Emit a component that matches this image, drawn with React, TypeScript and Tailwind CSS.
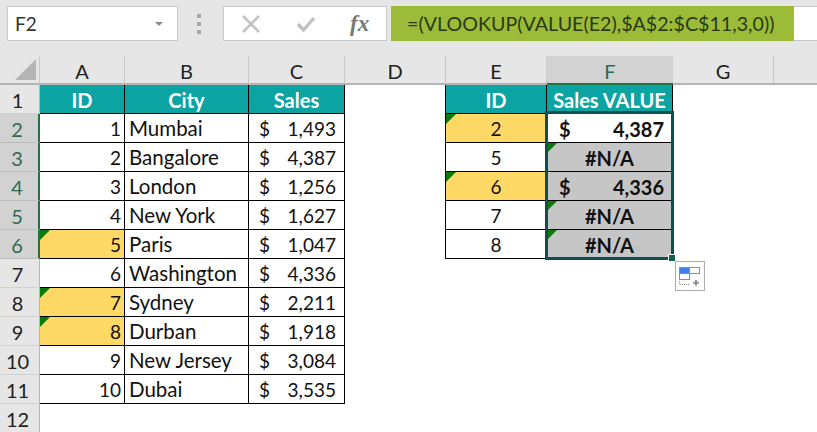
const columns = [
  { label: "A", width: "w-[85px]" },
  { label: "B", width: "w-[124px]" },
  { label: "C", width: "w-[96px]" },
  { label: "D", width: "w-[101px]" },
  { label: "E", width: "w-[101px]" },
  { label: "F", width: "w-[126px]" },
  { label: "G", width: "w-[101px]" },
]

const rows = [
  { id: "1", city: "Mumbai", sales: "1,493" },
  { id: "2", city: "Bangalore", sales: "4,387" },
  { id: "3", city: "London", sales: "1,256" },
  { id: "4", city: "New York", sales: "1,627" },
  { id: "5", city: "Paris", sales: "1,047", flag: true },
  { id: "6", city: "Washington", sales: "4,336" },
  { id: "7", city: "Sydney", sales: "2,211", flag: true },
  { id: "8", city: "Durban", sales: "1,918", flag: true },
  { id: "9", city: "New Jersey", sales: "3,084" },
  { id: "10", city: "Dubai", sales: "3,535" },
]

const lookups = [
  { id: "2", value: "4,387", flag: true },
  { id: "5" },
  { id: "6", value: "4,336", flag: true, gray: true },
  { id: "7" },
  { id: "8" },
]

function Corner() {
  return (
    <svg className="absolute left-0 top-0" width="10" height="10" viewBox="0 0 10 10">
      <path d="M0 0H10L0 10Z" fill="#0b7a0b" />
    </svg>
  )
}

function RowHead({ label, active }: { label: string; active?: boolean }) {
  return (
    <div
      className={
        active
          ? "flex h-[29px] w-10 shrink-0 items-center justify-center border-r-2 border-b border-r-[#217346] border-b-[#bcbcbc] bg-[#d2d2d2] pt-px pr-1 text-[20px] text-[#2f6a55]"
          : "flex h-[29px] w-10 shrink-0 items-center justify-center border-r border-b border-r-[#b5b5b5] border-b-[#d0d0d0] bg-[#e6e6e6] pt-px pr-1 text-[20px] text-[#222]"
      }
    >
      {label}
    </div>
  )
}

function HeaderCell({ width, label }: { width: string; label: string }) {
  return (
    <div className={`flex h-[29px] shrink-0 items-center justify-center border-r border-b border-black bg-[#0ca3a3] pt-px text-[20px] font-bold text-white ${width}`}>
      {label}
    </div>
  )
}

function Sales({ value }: { value: string }) {
  return (
    <div className="flex h-[29px] w-[96px] shrink-0 items-center justify-between border-r border-b border-black pt-px pr-2 pl-2.5 text-[#111]">
      <span>$</span>
      <span>{value}</span>
    </div>
  )
}

function LookupCells({ row }: { row?: (typeof lookups)[number] }) {
  if (!row) return <div className="w-[227px] shrink-0" />
  return (
    <>
      <div
        className={`relative -ml-px flex h-[29px] w-[102px] shrink-0 items-center justify-center border-x border-b border-black pt-px text-[#111] ${row.flag ? "bg-[#ffd966]" : "bg-white"}`}
      >
        {row.flag && <Corner />}
        {row.id}
      </div>
      {row.value ? (
        <div
          className={`flex h-[29px] w-[126px] shrink-0 items-center justify-between border-r border-b border-black pt-px pr-2 pl-3 text-[20px] font-bold text-[#111] ${row.gray ? "bg-[#c6c6c6]" : "bg-white"}`}
        >
          <span>$</span>
          <span>{row.value}</span>
        </div>
      ) : (
        <div className="relative flex h-[29px] w-[126px] shrink-0 items-center justify-center border-r border-b border-black bg-[#c6c6c6] pt-px text-[20px] font-bold text-[#111]">
          <Corner />
          #N/A
        </div>
      )}
    </>
  )
}

export default function App() {
  return (
    <div className="relative h-[432px] w-[817px] overflow-hidden bg-white font-['Lato',sans-serif] text-[19px] leading-none">
      {/* Formula bar */}
      <div className="flex h-14 items-start bg-[#e6e6e6] pt-1.5">
        <div className="ml-[7px] flex h-[35px] w-[171px] items-center justify-between border border-[#c9c9c9] bg-white pr-3.5 pl-[7px] text-[#333]">
          <span>F2</span>
          <span className="h-0 w-0 border-x-4 border-t-4 border-x-transparent border-t-[#8a8a8a]" />
        </div>
        <div className="ml-[19px] mt-2 flex w-[4px] flex-col gap-[4px]">
          <span className="h-1 w-1 bg-[#a6a6a6]" />
          <span className="h-1 w-1 bg-[#a6a6a6]" />
          <span className="h-1 w-1 bg-[#a6a6a6]" />
        </div>
        <div className="ml-[22px] flex h-[35px] w-[164px] items-center border border-[#c9c9c9] bg-white">
          <svg className="ml-[18px]" width="18" height="18" viewBox="0 0 18 18">
            <path d="M1 1L17 17M17 1L1 17" stroke="#c2c2c2" strokeWidth="2.6" fill="none" />
          </svg>
          <svg className="ml-[36px]" width="20" height="18" viewBox="0 0 20 18">
            <path d="M2 9L7.5 15L18 3" stroke="#c2c2c2" strokeWidth="3.4" fill="none" />
          </svg>
          <span className="ml-[34px] font-['Liberation_Serif',serif] text-[23px] font-bold text-[#777] italic">fx</span>
        </div>
        <div className="ml-[4px] flex h-[35px] w-[403px] items-center bg-[#9bbb39] pl-[16px] text-[19.65px] text-[#2a3a14]">
          =(VLOOKUP(VALUE(E2),$A$2:$C$11,3,0))
        </div>
        <div className="h-[35px] flex-1 border-y border-[#c9c9c9] bg-white" />
      </div>

      {/* Column headings */}
      <div className="flex h-[29px] border-b-2 border-[#b5b5b5] bg-[#e6e6e6]">
        <div className="relative h-full w-10 shrink-0 border-r border-[#c9c9c9]">
          <svg className="absolute right-[3px] bottom-[3px]" width="21" height="21" viewBox="0 0 21 21">
            <path d="M21 0V21H0Z" fill="#b5b5b5" />
          </svg>
        </div>
        {columns.map((col) => (
          <div
            key={col.label}
            className={
              col.label === "F"
                ? `-mb-0.5 flex shrink-0 items-center justify-center border-b-2 border-[#217346] bg-[#d2d2d2] pt-0.5 text-[20px] text-[#2f6a55] ${col.width}`
                : `flex shrink-0 items-center justify-center border-r border-[#c9c9c9] pt-0.5 text-[20px] text-[#222] ${col.width}`
            }
          >
            {col.label}
          </div>
        ))}
      </div>

      {/* Sheet */}
      <div className="flex">
        <RowHead label="1" />
        <HeaderCell width="w-[85px]" label="ID" />
        <HeaderCell width="w-[124px]" label="City" />
        <HeaderCell width="w-[96px]" label="Sales" />
        <div className="w-[101px] shrink-0" />
        <div className="-ml-px w-px shrink-0 bg-black" />
        <HeaderCell width="w-[101px]" label="ID" />
        <HeaderCell width="w-[126px]" label="Sales VALUE" />
      </div>
      {rows.map((row, i) => (
        <div key={row.id} className="flex">
          <RowHead label={String(i + 2)} active={i < 5} />
          <div
            className={`relative flex h-[29px] w-[85px] shrink-0 items-center justify-end border-r border-b border-black pt-px pr-[3px] text-[#111] ${row.flag ? "bg-[#ffd966]" : "bg-white"}`}
          >
            {row.flag && <Corner />}
            {row.id}
          </div>
          <div className="flex h-[29px] w-[124px] shrink-0 items-center border-r border-b border-black pt-px pl-1 text-[20.5px] text-[#111]">
            {row.city}
          </div>
          <Sales value={row.sales} />
          <div className="w-[101px] shrink-0" />
          <LookupCells row={lookups[i]} />
        </div>
      ))}
      <RowHead label="12" />

      {/* Selection over F2:F6 */}
      <div className="absolute top-[111px] left-[545px] h-[149px] w-[129px] border-[3px] border-[#0f4f4f]" />
      <div className="absolute top-[254px] left-[668px] h-[7px] w-[7px] border-t border-l border-white bg-[#0f5f4a]" />

      {/* Paste options */}
      <div className="absolute top-[261px] left-[675px] h-[30px] w-[30px] border border-[#ababab] bg-white">
        <svg width="28" height="28" viewBox="0 0 28 28">
          <rect x="3.5" y="5.5" width="10" height="6" fill="#3f7fee" stroke="#8f8f8f" />
          <rect x="13.5" y="5.5" width="10" height="6" fill="#fff" stroke="#8f8f8f" />
          <rect x="3.5" y="11.5" width="10" height="6" fill="#fff" stroke="#8f8f8f" />
          <path d="M3.5 19v3.5h10.5" stroke="#8f8f8f" strokeDasharray="1 1" fill="none" />
          <path d="M20 18v5.5M17.2 20.7h5.6" stroke="#8f8f8f" strokeWidth="2" fill="none" />
        </svg>
      </div>
    </div>
  )
}
